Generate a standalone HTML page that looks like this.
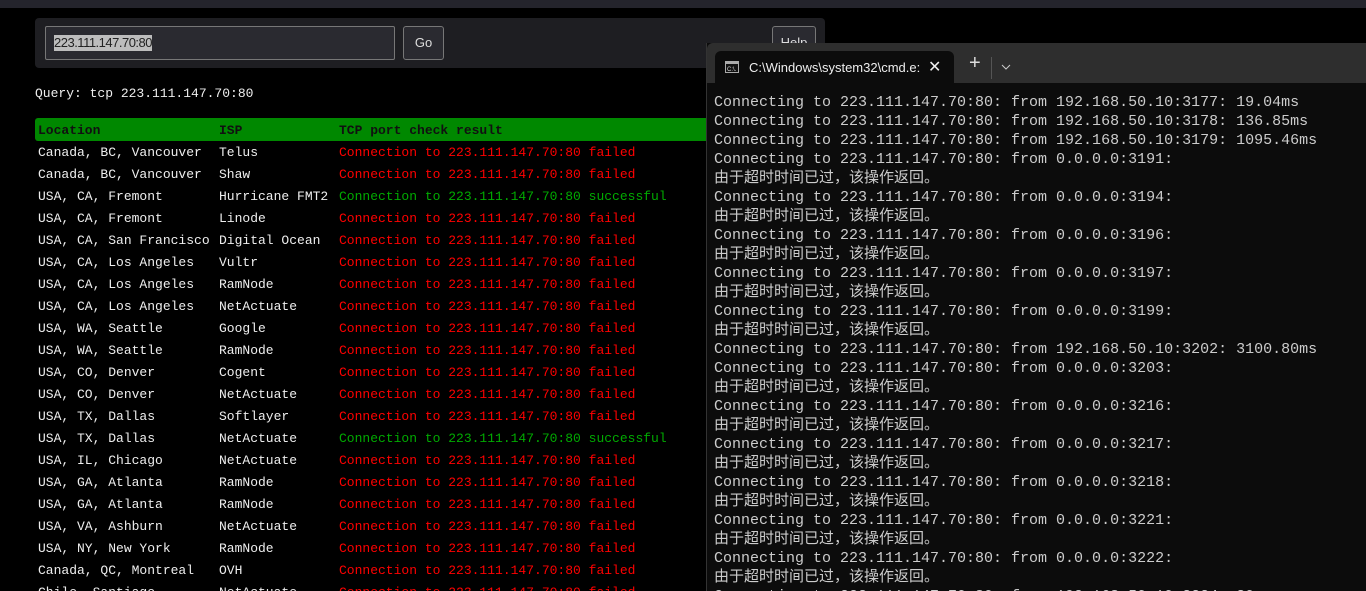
<!DOCTYPE html>
<html style="overflow:hidden;height:591px"><head><meta charset="utf-8"><style>
html,body{overflow:hidden;height:591px}
body{margin:0;width:1366px;background:#000;position:relative;font-family:"Liberation Mono","DejaVu Sans Mono",monospace}
.top{position:absolute;left:0;top:0;width:1366px;height:8px;background:#24242c}
.panel{position:absolute;left:35px;top:18px;width:790px;height:50px;background:#1e1e22;border-radius:4px}
.inp{position:absolute;left:45px;top:26px;width:348px;height:32px;border:1px solid #777;background:#2a2a30;border-radius:2px}
.inp span{position:absolute;left:8px;top:8px;background:#bdbdbd;color:#222;font:13px "Liberation Sans",sans-serif;letter-spacing:-0.5px;line-height:16px}
.btn{position:absolute;border:1px solid #777;background:#2a2a30;border-radius:3px;color:#ddd;font:13px "Liberation Sans",sans-serif;text-align:center}
.q{position:absolute;left:35px;top:86px;color:#eee;font-size:13px}
.hdr{position:absolute;left:35px;top:118px;width:680px;height:23px;background:#008800;border-radius:3px}
.hdr span,.row span{position:absolute;top:4px;white-space:pre;font-size:13px}
.hdr span{color:#111;font-weight:bold;top:5px}
.row{position:absolute;left:35px;height:22px;width:680px}
.row span{top:4px;color:#eee}
.row .f{color:#f00}.row .s{color:#0a0}
.term{position:absolute;left:706px;top:43px;width:660px;height:548px;background:#0c0c0c;border-left:1px solid #333;overflow:hidden}
.tabbar{position:absolute;left:0;top:0;width:660px;height:40px;background:#2e2e2e;border-radius:6px 0 0 0}
.tab{position:absolute;left:8px;top:8px;width:239px;height:32px;background:#0c0c0c;border-radius:6px 6px 0 0;color:#eee;font:13px "Liberation Sans",sans-serif}
.lines{position:absolute;left:7px;top:50px;color:#ccc;font-size:15px;line-height:19px;white-space:pre;font-family:"Liberation Mono","Noto Sans CJK SC",monospace}
</style></head><body>
<div class="top"></div>
<div class="panel"></div>
<div class="inp"><span>223.111.147.70:80</span></div>
<div class="btn" style="left:403px;top:26px;width:39px;height:32px;line-height:32px">Go</div>
<div class="btn" style="left:772px;top:26px;width:42px;height:32px;line-height:32px">Help</div>
<div class="q">Query: tcp 223.111.147.70:80</div>
<div class="hdr"><span style="left:3px">Location</span><span style="left:184px">ISP</span><span style="left:304px">TCP port check result</span></div>
<div class="row" style="top:141px"><span style="left:3px">Canada, BC, Vancouver</span><span style="left:184px">Telus</span><span class="f" style="left:304px">Connection to 223.111.147.70:80 failed</span></div>
<div class="row" style="top:163px"><span style="left:3px">Canada, BC, Vancouver</span><span style="left:184px">Shaw</span><span class="f" style="left:304px">Connection to 223.111.147.70:80 failed</span></div>
<div class="row" style="top:185px"><span style="left:3px">USA, CA, Fremont</span><span style="left:184px">Hurricane FMT2</span><span class="s" style="left:304px">Connection to 223.111.147.70:80 successful</span></div>
<div class="row" style="top:207px"><span style="left:3px">USA, CA, Fremont</span><span style="left:184px">Linode</span><span class="f" style="left:304px">Connection to 223.111.147.70:80 failed</span></div>
<div class="row" style="top:229px"><span style="left:3px">USA, CA, San Francisco</span><span style="left:184px">Digital Ocean</span><span class="f" style="left:304px">Connection to 223.111.147.70:80 failed</span></div>
<div class="row" style="top:251px"><span style="left:3px">USA, CA, Los Angeles</span><span style="left:184px">Vultr</span><span class="f" style="left:304px">Connection to 223.111.147.70:80 failed</span></div>
<div class="row" style="top:273px"><span style="left:3px">USA, CA, Los Angeles</span><span style="left:184px">RamNode</span><span class="f" style="left:304px">Connection to 223.111.147.70:80 failed</span></div>
<div class="row" style="top:295px"><span style="left:3px">USA, CA, Los Angeles</span><span style="left:184px">NetActuate</span><span class="f" style="left:304px">Connection to 223.111.147.70:80 failed</span></div>
<div class="row" style="top:317px"><span style="left:3px">USA, WA, Seattle</span><span style="left:184px">Google</span><span class="f" style="left:304px">Connection to 223.111.147.70:80 failed</span></div>
<div class="row" style="top:339px"><span style="left:3px">USA, WA, Seattle</span><span style="left:184px">RamNode</span><span class="f" style="left:304px">Connection to 223.111.147.70:80 failed</span></div>
<div class="row" style="top:361px"><span style="left:3px">USA, CO, Denver</span><span style="left:184px">Cogent</span><span class="f" style="left:304px">Connection to 223.111.147.70:80 failed</span></div>
<div class="row" style="top:383px"><span style="left:3px">USA, CO, Denver</span><span style="left:184px">NetActuate</span><span class="f" style="left:304px">Connection to 223.111.147.70:80 failed</span></div>
<div class="row" style="top:405px"><span style="left:3px">USA, TX, Dallas</span><span style="left:184px">Softlayer</span><span class="f" style="left:304px">Connection to 223.111.147.70:80 failed</span></div>
<div class="row" style="top:427px"><span style="left:3px">USA, TX, Dallas</span><span style="left:184px">NetActuate</span><span class="s" style="left:304px">Connection to 223.111.147.70:80 successful</span></div>
<div class="row" style="top:449px"><span style="left:3px">USA, IL, Chicago</span><span style="left:184px">NetActuate</span><span class="f" style="left:304px">Connection to 223.111.147.70:80 failed</span></div>
<div class="row" style="top:471px"><span style="left:3px">USA, GA, Atlanta</span><span style="left:184px">RamNode</span><span class="f" style="left:304px">Connection to 223.111.147.70:80 failed</span></div>
<div class="row" style="top:493px"><span style="left:3px">USA, GA, Atlanta</span><span style="left:184px">RamNode</span><span class="f" style="left:304px">Connection to 223.111.147.70:80 failed</span></div>
<div class="row" style="top:515px"><span style="left:3px">USA, VA, Ashburn</span><span style="left:184px">NetActuate</span><span class="f" style="left:304px">Connection to 223.111.147.70:80 failed</span></div>
<div class="row" style="top:537px"><span style="left:3px">USA, NY, New York</span><span style="left:184px">RamNode</span><span class="f" style="left:304px">Connection to 223.111.147.70:80 failed</span></div>
<div class="row" style="top:559px"><span style="left:3px">Canada, QC, Montreal</span><span style="left:184px">OVH</span><span class="f" style="left:304px">Connection to 223.111.147.70:80 failed</span></div>
<div class="row" style="top:581px;height:10px;overflow:hidden"><span style="left:3px">Chile, Santiago</span><span style="left:184px">NetActuate</span><span class="f" style="left:304px">Connection to 223.111.147.70:80 failed</span></div>
<div class="term">
<div class="tabbar">
<div class="tab">
<svg style="position:absolute;left:10px;top:10px" width="14" height="12"><rect x="0.5" y="0.5" width="13" height="11" fill="#111" stroke="#aaa"/><rect x="1" y="1" width="12" height="2" fill="#aaa"/><text x="2" y="10" font-size="6" fill="#ddd" font-family="Liberation Sans">C:\.</text></svg>
<span style="position:absolute;left:34px;top:9px">C:\Windows\system32\cmd.e:</span>
<span style="position:absolute;left:213px;top:6px;font-size:16px">✕</span>
</div>
<span style="position:absolute;left:262px;top:10px;color:#ddd;font:20px 'Liberation Sans',sans-serif;line-height:20px">+</span>
<div style="position:absolute;left:284px;top:14px;width:1px;height:22px;background:#555"></div>
<svg style="position:absolute;left:294px;top:21px" width="10" height="6"><path d="M1 1L5 5L9 1" stroke="#ccc" fill="none"/></svg>
</div>
<div class="lines">Connecting to 223.111.147.70:80: from 192.168.50.10:3177: 19.04ms
Connecting to 223.111.147.70:80: from 192.168.50.10:3178: 136.85ms
Connecting to 223.111.147.70:80: from 192.168.50.10:3179: 1095.46ms
Connecting to 223.111.147.70:80: from 0.0.0.0:3191:
由于超时时间已过，该操作返回。
Connecting to 223.111.147.70:80: from 0.0.0.0:3194:
由于超时时间已过，该操作返回。
Connecting to 223.111.147.70:80: from 0.0.0.0:3196:
由于超时时间已过，该操作返回。
Connecting to 223.111.147.70:80: from 0.0.0.0:3197:
由于超时时间已过，该操作返回。
Connecting to 223.111.147.70:80: from 0.0.0.0:3199:
由于超时时间已过，该操作返回。
Connecting to 223.111.147.70:80: from 192.168.50.10:3202: 3100.80ms
Connecting to 223.111.147.70:80: from 0.0.0.0:3203:
由于超时时间已过，该操作返回。
Connecting to 223.111.147.70:80: from 0.0.0.0:3216:
由于超时时间已过，该操作返回。
Connecting to 223.111.147.70:80: from 0.0.0.0:3217:
由于超时时间已过，该操作返回。
Connecting to 223.111.147.70:80: from 0.0.0.0:3218:
由于超时时间已过，该操作返回。
Connecting to 223.111.147.70:80: from 0.0.0.0:3221:
由于超时时间已过，该操作返回。
Connecting to 223.111.147.70:80: from 0.0.0.0:3222:
由于超时时间已过，该操作返回。
Connecting to 223.111.147.70:80: from 192.168.50.10:3224: 30ms</div>
</div>
</body></html>
